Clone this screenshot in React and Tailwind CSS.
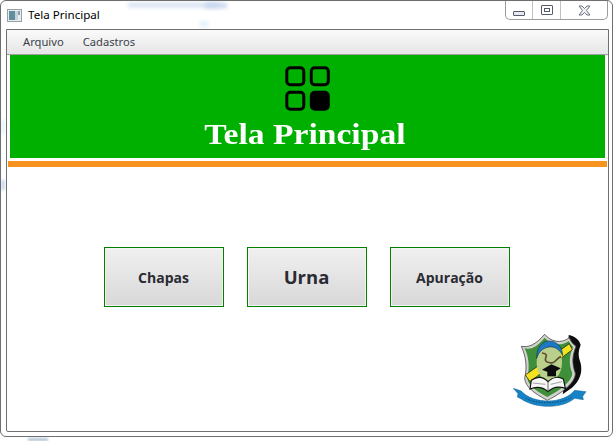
const Squares = () => (
  <svg width="46" height="46" viewBox="0 0 46 46" fill="none" stroke="#000" strokeWidth="3">
    <rect x="1.8" y="1.8" width="17" height="17" rx="3.5" />
    <rect x="26.3" y="1.8" width="17" height="17" rx="3.5" />
    <rect x="1.8" y="26.3" width="17" height="17" rx="3.5" />
    <rect x="26.3" y="26.3" width="17" height="17" rx="3.5" fill="#000" />
  </svg>
);

const AppIcon = () => (
  <svg width="15" height="13" viewBox="0 0 15 13">
    <rect x="0.5" y="0.5" width="14" height="12" fill="#e8edf0" stroke="#9a9fa6" />
    <rect x="2" y="2" width="6" height="9" fill="#5f8f9c" />
    <rect x="8" y="2" width="3" height="9" fill="#c5d4d9" />
    <rect x="11" y="2" width="2" height="4" fill="#8aa0ab" />
  </svg>
);

const Crest = () => (
  <svg width="90" height="90" viewBox="0 0 270 270" className="blur-[0.5px]">
    <path d="M188 30 C206 34 220 44 224 60 C216 80 216 92 224 115 C230 142 222 168 198 188 L170 208 L186 110 Z" fill="#0d0d0d" />
    <path d="M46 64 C68 68 88 60 116 28 C134 50 165 58 190 38 C194 50 202 58 210 64 C200 90 196 112 208 145 C208 172 172 202 124 226 C86 206 58 186 56 160 C64 125 60 95 46 64 Z" fill="#cfd3cc" stroke="#4a4a4a" strokeWidth="2.5" />
    <path d="M56 70 C76 74 92 66 116 38 C134 58 165 66 188 48 C192 56 197 62 201 66 C191 92 187 114 199 145 C199 167 166 194 124 216 C90 198 66 180 64 160 C72 125 68 95 56 70 Z" fill="#3f8f3a" />
    <path d="M190 56 L199 74 L72 170 L58 150 Z" fill="#f2e21f" stroke="#111" strokeWidth="2" />
    <ellipse cx="130" cy="112" rx="38" ry="56" fill="#b9cf8c" />
    <path d="M92 100 C92 62 112 48 130 48 C150 48 170 64 170 92 C160 72 146 64 130 66 C112 68 98 80 92 100 Z" fill="#1f78c4" stroke="#123" strokeWidth="1.5" />
    <path d="M108 84 C138 88 104 104 126 112 C150 120 148 100 165 95" fill="none" stroke="#5f4c30" strokeWidth="5" />
    <path d="M108 134 L136 118 L164 130 L138 146 Z" fill="#0c0c0c" />
    <rect x="124" y="138" width="26" height="16" fill="#0c0c0c" />
    <path d="M76 166 C96 152 112 156 126 170 C140 156 158 154 172 162 L178 190 C160 184 140 186 126 200 C110 186 92 184 72 192 Z" fill="#f7f7f7" stroke="#111" strokeWidth="3.5" />
    <path d="M126 170 L126 200" stroke="#222" strokeWidth="2" />
    <path d="M80 174 L118 178 M134 178 L168 170" stroke="#777" strokeWidth="2" />
    <path d="M22 190 L46 198 C62 218 96 228 126 228 C160 228 190 216 206 196 L240 200 L230 214 L232 224 L206 220 C184 238 156 244 126 244 C96 244 66 236 46 222 L34 216 L36 206 Z" fill="#1683c7" stroke="#0f5f92" strokeWidth="1.5" />
    <path d="M60 220 C84 236 160 240 200 216" fill="none" stroke="#0b3a5c" strokeWidth="2" strokeDasharray="5 3" />
  </svg>
);

const MainButton = ({ label, large }) => (
  <button
    className={`w-[120px] h-[60px] border border-[#008000] bg-gradient-to-b from-[#f0f0f0] to-[#d8d8d8] shadow-[inset_0_0_0_1px_#f4f4f4] text-[#2b2b33] font-bold flex items-center justify-center ${large ? "text-[18.5px]" : "text-[14px]"}`}
    style={{ fontFamily: '"Open Sans", "Noto Sans", sans-serif' }}
  >
    {label}
  </button>
);

export default function App() {
  return (
    <div
      className="relative w-[614px] h-[441px] bg-white overflow-hidden"
      style={{ fontFamily: '"Noto Sans", "Open Sans", sans-serif' }}
    >
      {/* blurred desktop showing through the glass frame */}
      <div className="absolute left-[128px] top-[3px] w-[90px] h-[4px] bg-[#cfdcf0] blur-[2px]" />
      <div className="absolute left-[205px] top-[3px] w-[22px] h-[5px] bg-[#c4d4ee] blur-[2px]" />
      <div className="absolute left-[200px] top-[21px] w-[8px] h-[6px] bg-[#dff0fb] blur-[2px]" />
      <div className="absolute left-[1px] top-[180px] w-[4px] h-[10px] bg-[#c9d6f0] blur-[1.5px]" />
      <div className="absolute left-[1px] top-[120px] w-[4px] h-[14px] bg-[#e8f4fc] blur-[1.5px]" />
      <div className="absolute left-[28px] top-[438px] w-[20px] h-[3px] bg-[#b4c4d8] blur-[1px]" />

      <div className="relative w-[613px] h-[437px] border border-[#6e6e6e] rounded-[6px] flex flex-col">
        <div className="h-[28px] shrink-0 flex pl-[6px] pr-[4px] justify-between">
          <div className="flex items-center gap-[6px] h-[28px]">
            <AppIcon />
            <span className="text-[11.6px] text-black leading-none">Tela Principal</span>
          </div>
          <div className="flex h-[19px] w-[103px] border border-t-0 border-[#9b9ba0] rounded-b-[5px] bg-white">
            <div className="w-[27px] border-r border-[#c0c0c4] flex items-end justify-center pb-[3px]">
              <div className="w-[12px] h-[5px] border border-[#555c6b] bg-[#e8e8ee] rounded-[1px]" />
            </div>
            <div className="w-[28px] border-r border-[#c0c0c4] flex items-start justify-center pt-[4px]">
              <div className="w-[12px] h-[10px] border border-[#555c6b] flex items-center justify-center rounded-[1px]">
                <div className="w-[6px] h-[4px] border border-[#555c6b]" />
              </div>
            </div>
            <div className="flex-1 flex items-start justify-center pt-[4px]">
              <svg width="13" height="11" viewBox="0 0 13 11">
                <path d="M1 1 H4 L6.5 3.5 L9 1 H12 L8.5 5.5 L12 10 H9 L6.5 7.5 L4 10 H1 L4.5 5.5 Z" fill="#eef0f2" stroke="#6a7080" strokeWidth="1" />
              </svg>
            </div>
          </div>
        </div>

        <div className="w-[603px] ml-[5px] h-[403px] border border-[#6f6f6f] rounded-b-[2px] flex flex-col bg-white">
          <div className="h-[25px] shrink-0 bg-gradient-to-b from-[#fafafa] to-[#e6e6e6] border-b border-[#a0a0a0] flex items-center pl-[16px] pt-[1px] gap-[19px] text-[11.2px] text-[#3a3f4a]">
            <span>Arquivo</span>
            <span>Cadastros</span>
          </div>

          <div className="mx-[3px] h-[103px] shrink-0 bg-[#00b000] flex flex-col items-center pt-[11px]">
            <Squares />
            <div
              className="text-white font-bold text-[30px] scale-x-[1.12] leading-none mt-[7px] mr-[5px]"
              style={{ fontFamily: '"Liberation Serif", "DejaVu Serif", serif' }}
            >
              Tela Principal
            </div>
          </div>

          <div className="mx-[1px] mt-[3px] h-[6px] shrink-0 bg-[#f7931e]" />

          <div className="flex justify-center gap-[23px] mt-[80px] ml-[-2px]">
            <MainButton label="Chapas" />
            <MainButton label="Urna" large />
            <MainButton label="Apuração" />
          </div>

          <div className="flex justify-end mt-[18px] pr-[12px]">
            <Crest />
          </div>
        </div>
      </div>
    </div>
  );
}
